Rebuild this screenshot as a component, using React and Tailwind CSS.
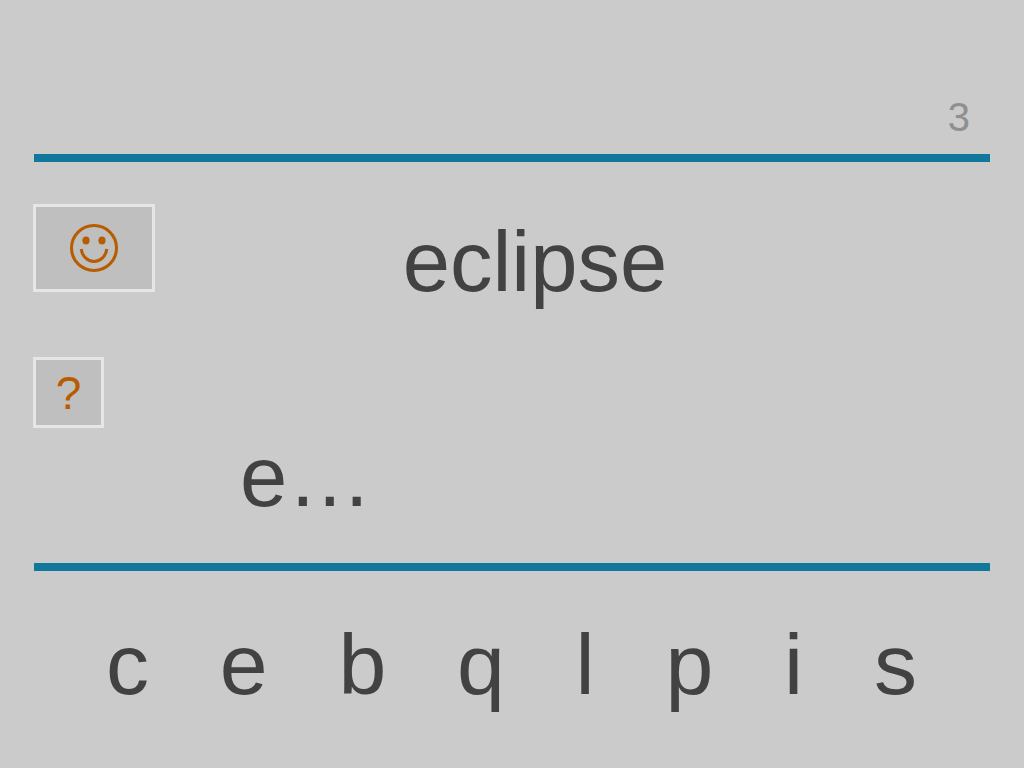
import React, { useState } from 'react';

const LETTERS = ['c', 'e', 'b', 'q', 'l', 'p', 'i', 's'];

const SmileIcon = () => (
  <svg viewBox="0 0 48 48" className="h-12 w-12" fill="none" stroke="currentColor" aria-hidden="true">
    <circle cx="24" cy="24" r="22.5" strokeWidth="3" />
    <ellipse cx="16" cy="16.4" rx="3.6" ry="4" fill="currentColor" stroke="none" />
    <ellipse cx="32" cy="16.4" rx="3.6" ry="4" fill="currentColor" stroke="none" />
    <path d="M11.2 25C12 32 17.5 37.4 24 37.4S36 32 36.8 25" strokeWidth="3" />
  </svg>
);

const App = () => {
  const [typed, setTyped] = useState('e');

  return (
    <main className="flex min-h-screen flex-col bg-[#cbcbcb] px-[33px] font-['Liberation_Sans',Arial,sans-serif] text-[#424242]">
      <header className="mx-px flex items-end justify-end border-b-8 border-[#11779b] pt-[94px] pr-5 pb-[14px]">
        <span className="text-[40px] leading-[46px] text-[#8f8f8f]">3</span>
      </header>

      <section>
        <div className="grid grid-cols-[122px_1fr] items-start pt-[42px]">
          <button type="button" aria-label="Hear the word" className="flex h-[88px] items-center justify-center border-[3px] border-[#e6e6e6] bg-[#bfbfbf] text-[#b85c00]">
            <SmileIcon />
          </button>
          <h1 className="pt-2 pr-[76px] text-center text-[85px] leading-[100px]">eclipse</h1>
        </div>
        <div className="pt-[45px]">
          <button type="button" aria-label="Hint" onClick={() => setTyped('e')} className="flex h-[71px] w-[71px] items-center justify-center border-[3px] border-[#e6e6e6] bg-[#bfbfbf] text-[46px] leading-none text-[#b85c00]">
            ?
          </button>
        </div>
        <p className="pb-[37px] pl-[207px] text-[85px] leading-[98px]">{typed}…</p>
      </section>

      <nav aria-label="Letters" className="mx-px flex justify-between border-t-8 border-[#11779b] pt-[43px] pr-[73px] pl-[72px]">
        {LETTERS.map((letter) => (
          <button key={letter} type="button" onClick={() => setTyped(typed + letter)} className="text-[86px] leading-[100px]">
            {letter}
          </button>
        ))}
      </nav>
    </main>
  );
};

export default App;
